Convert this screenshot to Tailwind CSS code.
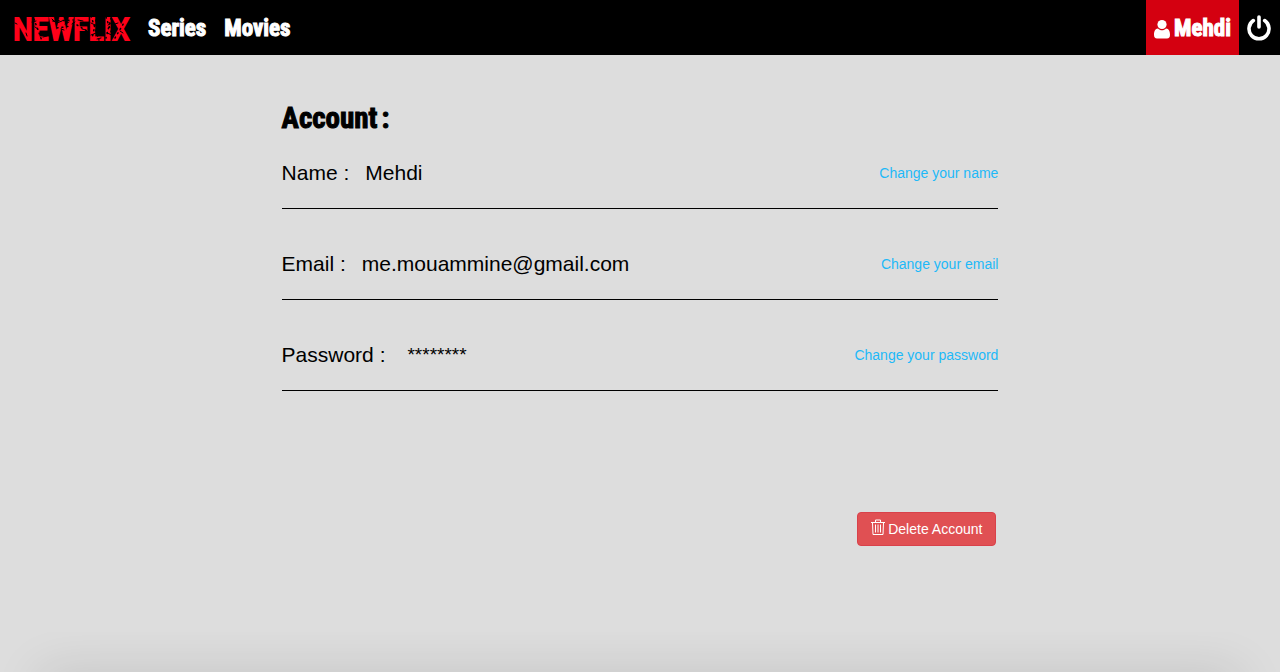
<!DOCTYPE html>
<html lang="en">
<head>
<meta charset="utf-8">
<meta name="viewport" content="width=device-width, initial-scale=1">
<title>Newflix - Account</title>
<script src="https://cdn.jsdelivr.net/npm/@tailwindcss/browser@4"></script>
</head>
<body class="flex min-h-screen flex-col overflow-x-hidden bg-[#dddddd] font-['Helvetica','Liberation_Sans',sans-serif] text-black">
<header class="flex h-[55px] items-stretch bg-black font-['Impact','Roboto_Condensed','Liberation_Sans_Narrow',sans-serif] text-[23px] leading-8 font-bold text-white">
  <a href="#" aria-label="Newflix" class="ml-3 flex items-center">
    <svg class="h-[55px] w-[120px]" viewBox="0 0 120 55">
      <text x="1" y="40" font-size="32" font-weight="400" fill="#ff0019" stroke="#ff0019" stroke-width="2">NEWFLIX</text>
      <g stroke="#000" fill="none" stroke-linecap="round">
        <path stroke-width="1" d="M3 23l2 1M14 33l1 3M20 22l4-1M23 27l3 2M31 37l4-1M40 19l3 3M45 23l5-2M53 24l4-2M49 29l3 1M60 24l3-2M66 20l5 1M70 29l4 1M79 23l4 2M79 35l5-2M85 39l4-1M96 25l4-2M95 33l5 2M103 24l3-1M108 31l3 2"/>
        <path stroke-width="1.500" stroke-dasharray="1 4" d="M22 19l8 22M41 21l20-1M45 28l14-2M65 25l10 6M79 16l8 24M84 20l-4 19M94 17l8 23M99 18l-5 20M103 38l10-17"/>
      </g>
    </svg>
  </a>
  <nav class="ml-4 flex items-center gap-[18px] pt-[2px]">
    <a href="#" class="[-webkit-text-stroke:1px_white]">Series</a>
    <a href="#" class="[-webkit-text-stroke:1px_white]">Movies</a>
  </nav>
  <a href="#" class="ml-auto flex items-center gap-1 bg-[#d40010] px-2 pt-[2px]">
    <svg class="h-5 w-4" viewBox="0 0 16 20" fill="currentColor" aria-hidden="true"><circle cx="8" cy="5.500" r="4.600"/><path d="M4 9.500c2 2.400 6 2.400 8 0 3 .2 4 3 4 6.200 0 2.500-1 3.800-3 3.800H3c-2 0-3-1.300-3-3.800C0 12.500 1 9.700 4 9.500z"/></svg>
    <span class="[-webkit-text-stroke:1px_white]">Mehdi</span>
  </a>
  <button type="button" aria-label="Log out" class="flex items-center px-2">
    <svg class="h-[26px] w-[25px]" viewBox="0 0 25 26" fill="none" stroke="currentColor" stroke-width="3.600" stroke-linecap="round" aria-hidden="true"><path d="M12 2v10M6.300 5.600a10 10 0 1 0 11.400 0"/></svg>
  </button>
</header>
<main class="mx-auto w-[56%] grow pt-11">
  <h1 class="font-['Impact','Roboto_Condensed','Liberation_Sans_Narrow',sans-serif] text-[29px] leading-[38px] font-bold [-webkit-text-stroke:1px_black]">Account<span class="ml-1">:</span></h1>
  <dl>
    <div class="flex h-[72px] items-center border-b border-black text-[21px]">
      <dt>Name :</dt><dd class="ml-4">Mehdi</dd>
      <dd class="ml-auto text-sm"><a href="#" class="text-[#1db9f8]">Change your name</a></dd>
    </div>
    <div class="mt-5 flex h-[71px] items-center border-b border-black text-[21px]">
      <dt>Email :</dt><dd class="ml-4">me.mouammine@gmail.com</dd>
      <dd class="ml-auto text-sm"><a href="#" class="text-[#1db9f8]">Change your email</a></dd>
    </div>
    <div class="mt-5 flex h-[71px] items-center border-b border-black text-[21px]">
      <dt>Password :</dt><dd class="ml-[22px] text-[19px]">********</dd>
      <dd class="ml-auto text-sm"><a href="#" class="text-[#1db9f8]">Change your password</a></dd>
    </div>
  </dl>
  <div class="flex justify-end pt-[121px] pr-[2px]">
    <button type="button" class="flex h-[34px] items-center gap-[3px] rounded border border-[#d9414a] bg-[#e05053] px-[13px] text-sm text-white">
      <svg class="-mt-1 h-4 w-[14px]" viewBox="0 0 14 16" fill="none" stroke="currentColor" aria-hidden="true"><path d="M0 3.500h14M4.500 3V1h5v2M1.500 4l.5 11.500h10l.5-11.500M4.500 5.500v8M7 5.500v8M9.500 5.500v8"/></svg>
      Delete Account
    </button>
  </div>
</main>
<div class="h-10 overflow-hidden" aria-hidden="true"><div class="mx-10 mt-10 h-10 shadow-[0_0_50px_rgba(0,0,0,0.12)]"></div></div>
</body>
</html>
